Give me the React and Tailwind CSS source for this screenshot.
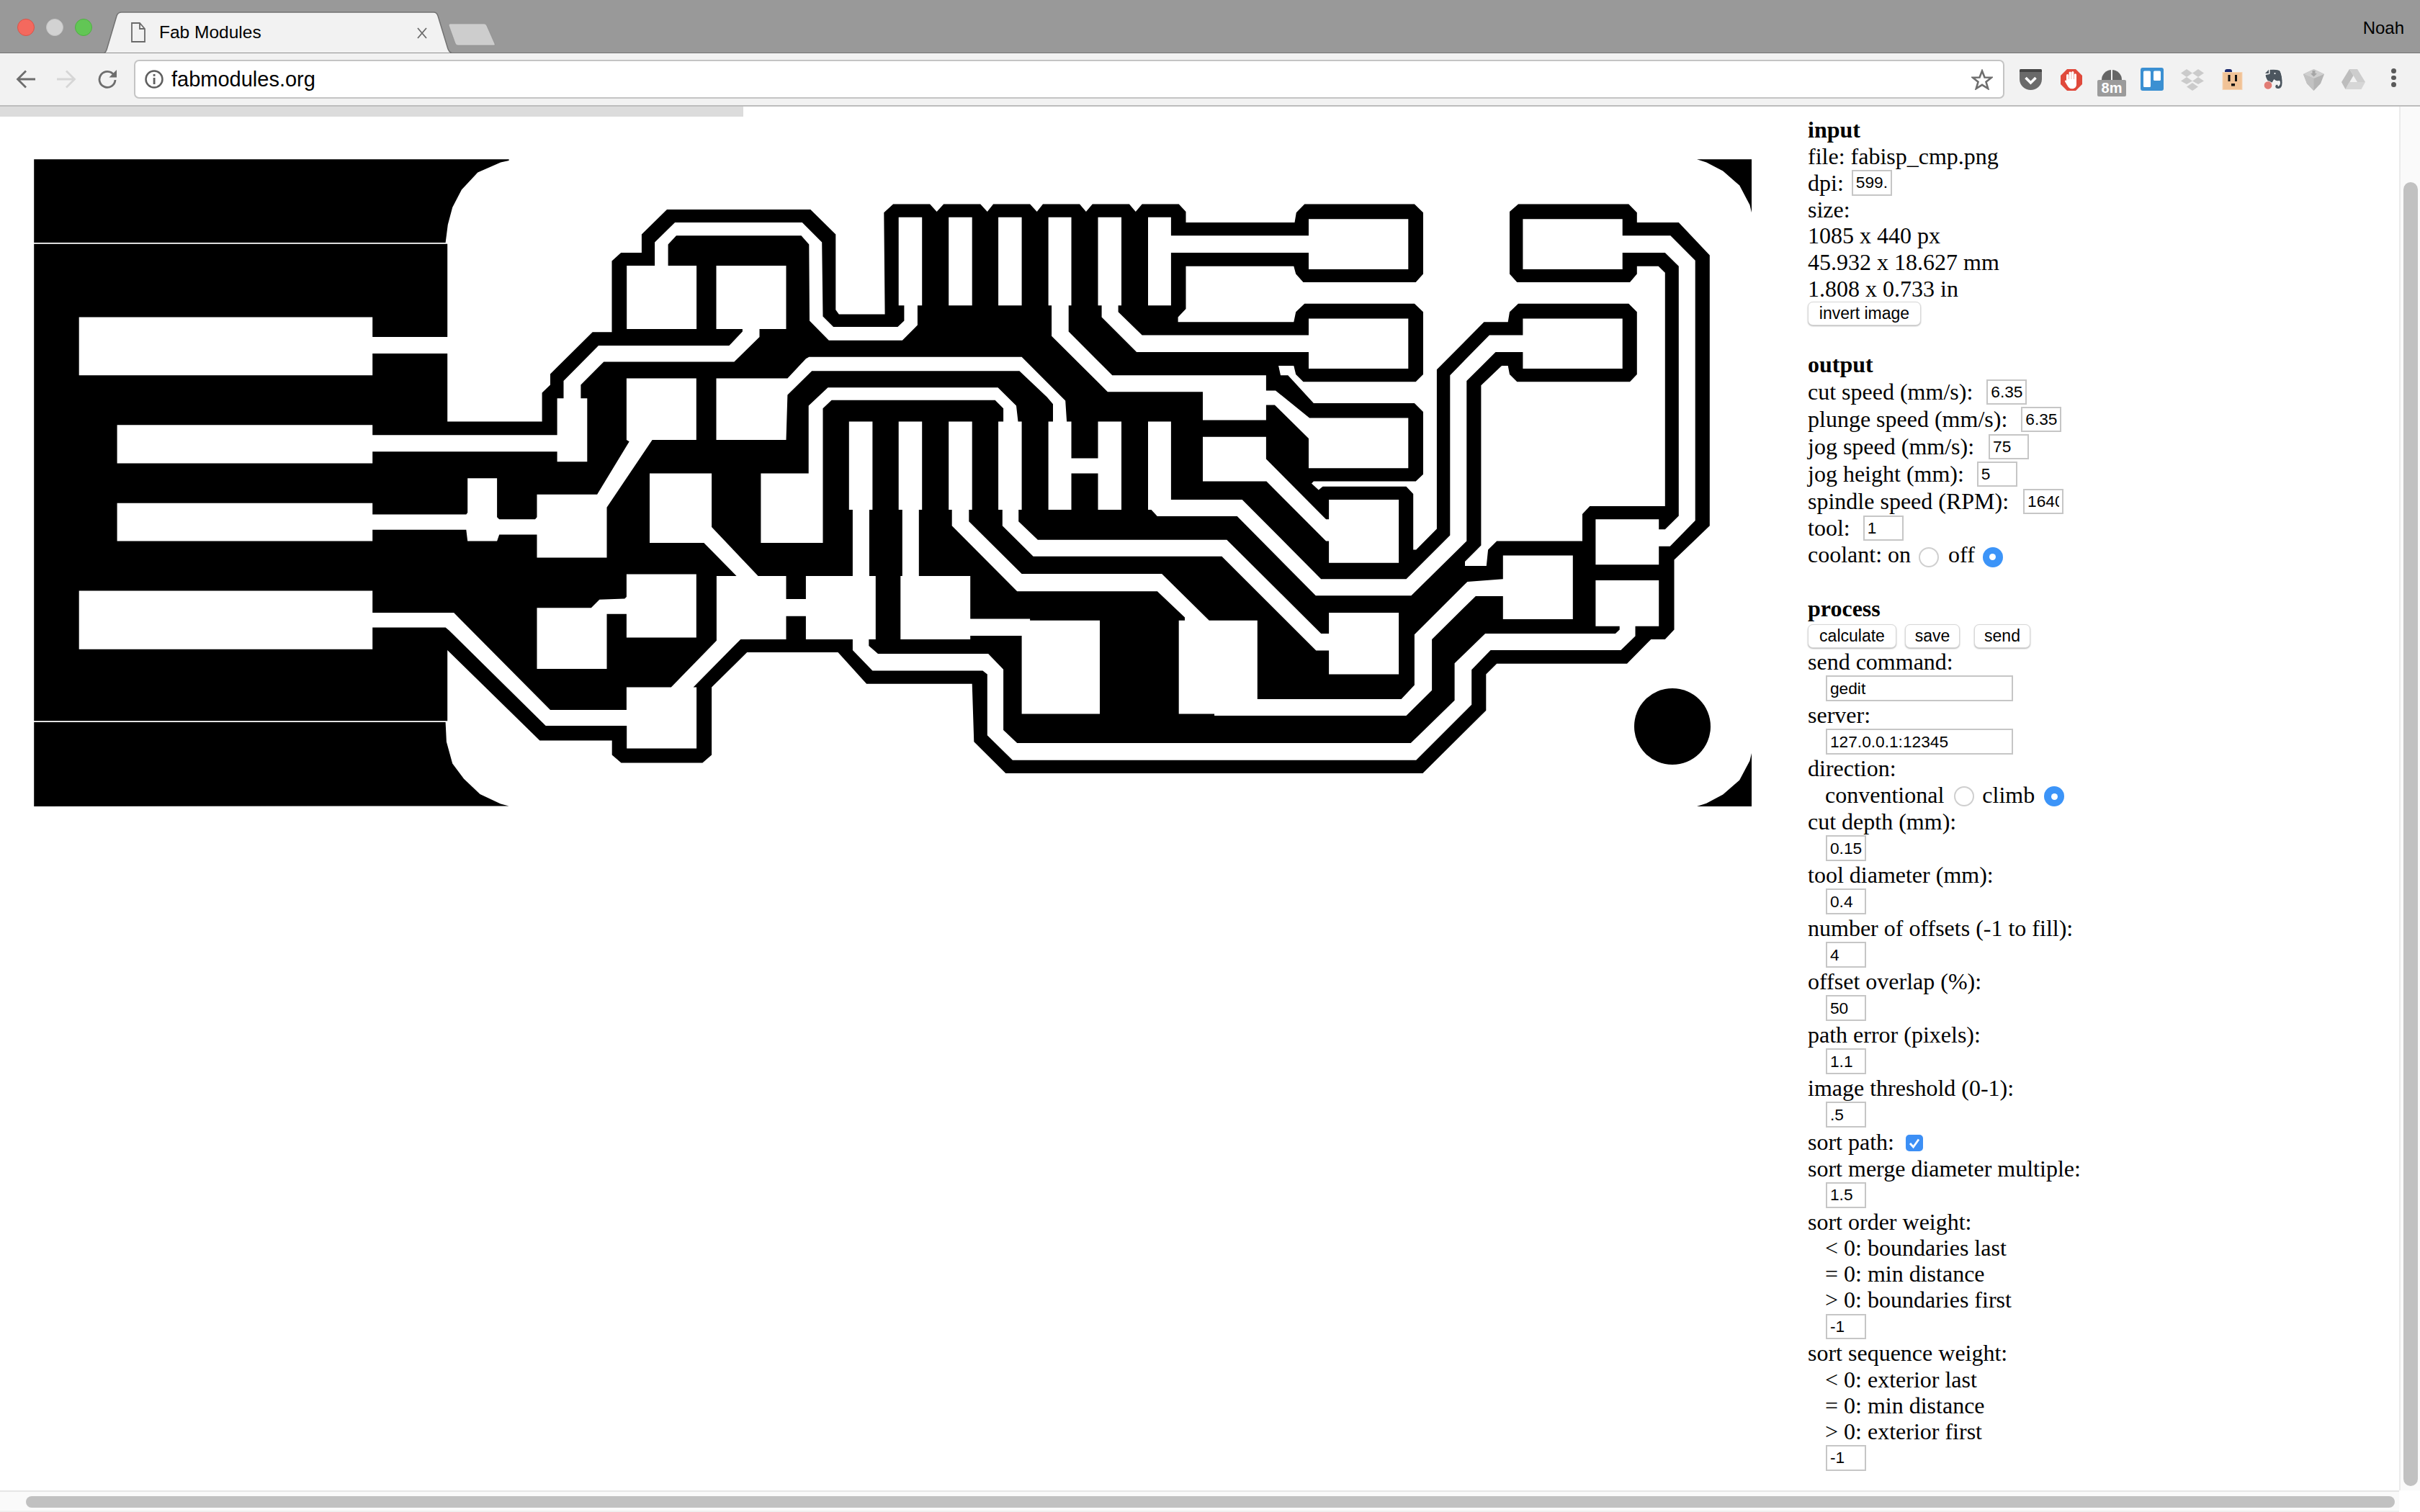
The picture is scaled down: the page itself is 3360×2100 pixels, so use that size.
import React from 'react';

// board outlines, written as "a|b|c x,y ..." - each letter is a differently scaled source space
const SX = { a: (x) => x / 1.568, b: (x) => 800 + x / 1.568, c: (x) => 1600 + x / 1.742 };
const pts = (str) => {
    let sp = 'a';
    return str.trim().split(/\s+/).map((t) => {
        if (SX[t]) { sp = t; return null; }
        const [x, y] = t.split(',').map(Number);
        return `${SX[sp](x).toFixed(1)},${(200 + y / 1.65).toFixed(1)}`;
    }).filter(Boolean).join(' ');
};

const BLACK = [
    'a 74,35 1108,35 1108,38 1090,42 1040,65 1005,105 985,145 975,185 970,226 74,226',
    'a 74,1325 970,1325 972,1370 985,1420 1010,1455 1045,1490 1090,1512 1108,1517 74,1518',
    'c 1317,35 1450,35 1450,160 1445,140 1420,95 1380,62 1340,42',
    'c 1317,1518 1450,1518 1450,1393 1445,1413 1420,1458 1380,1491 1340,1511',
    `a 74,229 974,229 974,636 1180,636 1180,570 1198,552 1198,527 1290,431 1332,431 1332,268 1352,249 1397,249 1397,207 1452,150
     b 510,150 565,207 565,380 572,390 672,390 670,157 690,138 770,138 785,155 800,138 880,138 895,155 908,138 988,138 1003,155 1016,138 1096,138 1110,155 1124,138 1204,138 1218,155 1232,138
     c 64,138 81,155 81,180 344,180 348,157 368,138 634,138 655,157 655,298 637,317 365,317 347,298 342,280 81,280 81,378 62,397 62,408 342,408 347,385 368,366 634,366 655,385 655,528 637,545 365,545 347,528 342,508 305,508 310,530 328,530 390,594 634,594 655,614 655,757 637,773 390,773 385,778 402,793 412,785 614,785 631,802 631,930 638,930 688,882 688,517 802,408 860,408 864,385 885,366 1152,366 1172,385 1172,528 1155,545 882,545 864,528 860,508 845,508 795,553 795,920 756,957 756,967 808,967 812,930 833,910 1040,910 1040,848 1058,830 1240,830 1240,295 1224,280 1172,280 1172,298 1155,317 882,317 864,298 864,155 885,138 1152,138 1172,157 1172,180 1273,180 1348,255 1348,875 1262,953 1262,1113 1240,1135 1206,1135 1148,1191 833,1191 807,1215 807,1298 654,1442
     b 935,1442 866,1370 862,1237 632,1237 570,1165 372,1165 295,1245 295,1400 275,1418 98,1418 78,1400 78,1367
     a 1175,1367 974,1160 974,1322 74,1322`,
];

const WHITE = [
    'a 172,397 811,397 811,442 980,442 980,480 811,480 811,530 172,530',
    `a 255,644 811,644 811,667 1213,667 1213,583 1227,583 1227,543 1303,462
     b 333,462 362,430 362,424 305,424 305,279 457,279 457,424 399,424 399,442 344,499 60,499 10,552 10,583 24,583 24,728
     a 1213,728 1213,705 811,705 811,732 255,732`,
    'a 255,823 811,823 811,849 1015,849 1018,845 1018,766 1082,766 1082,855 1087,860 1165,860 1169,855 1169,803 1300,803 1370,682 1364,678 1364,537 1516,537 1516,678 1420,678 1321,833 1321,948 1169,948 1169,895 1087,895 1082,910 1018,910 1015,884 811,884 811,910 255,910',
    'a 1364,986 1516,986 1516,1131 1364,1131 1364,1077 1321,1077 1321,1203 1169,1203 1169,1063 1287,1063 1305,1044 1360,1042 1364,1038',
    'b 110,279 171,279 171,225 215,180 492,180 535,225 537,395 560,419 700,419 714,405 714,370 702,370 702,168 753,168 753,370 743,370 743,415 710,450 550,450 508,405 507,230 490,210 218,210 200,230 200,279 262,279 262,424 110,424',
    `a 172,1024 811,1024 811,1074 988,1074 998,1085 1198,1297 1364,1297 1364,1245 1461,1245 1560,1138 1560,990
     b 349,990 278,914 160,914 160,755 295,755 295,878 396,990 457,990 457,1043 500,1043 500,990 602,990 602,838 594,838 594,636 645,636 645,838 638,838 638,990 652,990 652,1135 637,1135 637,1150 657,1168 897,1168 930,1204 930,1343 960,1373
     c 625,1373 731,1275 731,1190 805,1122 1120,1122 1130,1113 1130,1105 1072,1105 1072,1000 1225,1000 1225,1105 1168,1105 1168,1128 1133,1160 818,1160 772,1205 772,1285 638,1412
     b 950,1412 895,1355 895,1215 885,1207 645,1207 602,1160 602,1135 500,1135 500,1082 457,1082 457,1135 358,1135 255,1245 262,1245 262,1385 110,1385 110,1333
     a 1188,1333 978,1115 970,1108 811,1108 811,1158 172,1158`,
    `b 402,755 506,755 506,600 548,558 918,558 958,600 962,636 970,636 970,838 963,838 963,865 1005,907 1416,907
     c 180,907 408,1122 427,1122 427,1074 596,1074 596,1215 427,1215 427,1161 396,1161 168,945
     b 995,945 928,875 928,838 919,838 919,636 930,636 930,606 912,587 556,587 537,606 537,914 402,914`,
    'b 305,537 460,537 500,492 507,488 970,488 1065,588 1068,636 1078,636 1078,720 1136,720 1136,636 1187,636 1187,838 1136,838 1136,755 1078,755 1078,838 1028,838 1028,636 1038,636 1038,596 1025,580 965,520 513,520 460,575 457,678 305,678',
    'b 811,168 862,168 862,370 811,370',
    'b 919,168 970,168 970,370 919,370',
    `b 1028,168 1078,168 1078,370 1072,370 1072,430 1167,530 1502,530
     c 275,565 298,565 380,628 619,628 619,743 378,743 378,675 296,598 275,598 275,633 122,633 122,568
     b 1157,568 1035,440 1035,370 1028,370`,
    `b 1136,168 1187,168 1187,370 1180,370 1180,385 1232,438
     c 378,438 378,400 619,400 619,515 378,515 378,477
     b 1220,477 1144,397 1144,370 1136,370`,
    `b 1245,168 1295,168 1295,210
     c 378,210 378,172 619,172 619,287 378,287 378,249
     b 1295,249 1295,370 1245,370`,
    `b 1245,636 1295,636 1295,815 1450,815
     c 408,997 614,997 720,897 720,530 815,438 896,438 896,400 1137,400 1137,515 896,515 896,477 830,477 760,543 760,910 626,1035 395,1035 205,853
     b 1265,853 1252,838 1245,838`,
    `b 811,636 862,636 862,838 855,838 855,865 970,985 1275,985 1378,1092 1483,1092
     c 254,1272 602,1272 634,1240 634,1124 762,1003 848,997 848,943 1017,943 1017,1089 848,1089 848,1036 782,1036 676,1135 676,1252 614,1310 150,1310 150,1306
     b 1312,1306 1312,1092 1325,1092 1325,1085 1265,1025 960,1025 818,875 818,838 811,838`,
    'b 702,636 753,636 753,838 746,838 746,990 858,990 858,1088 988,1088 988,1092 1140,1092 1140,1306 970,1306 970,1127 858,1127 858,1135 706,1135 706,990 710,990 710,838 702,838',
    'c 122,671 275,671 275,722 420,860 427,860 427,815 596,815 596,960 427,960 427,910 420,910 276,773 122,773',
    'c 1072,860 1225,860 1225,883 1240,883 1273,852 1273,280 1240,249 1137,249 1137,287 896,287 896,172 1137,172 1137,210 1253,210 1313,267 1313,863 1252,922 1225,922 1225,964 1072,964',
];

function Board() {
    return (
        <svg viewBox="47 221 2385 899" className="w-[2385px] h-[899px] mt-[59px] ml-[47px] shrink-0">
            {BLACK.map((d, i) => <polygon key={i} points={pts(d)} fill="#000" />)}
            {WHITE.map((d, i) => <polygon key={i} points={pts(d)} fill="#fff" />)}
            <circle cx="2322" cy="1009" r="53" fill="#000" />
        </svg>
    );
}

function Field({ value, wide, className = '' }) {
    return (
        <input
            readOnly
            value={value}
            className={`${wide ? 'w-[260px]' : 'w-[56px]'} h-[35.5px] shrink-0 border-2 border-[#c6c6c6] bg-white px-[4px] text-[22.7px] text-black [font-family:'Liberation_Sans',sans-serif] outline-none ${className}`}
        />
    );
}

function Radio({ on, className = '' }) {
    if (on) {
        return (
            <span className={`w-[28px] h-[28px] rounded-full bg-[#3c94f8] flex items-center justify-center shrink-0 ${className}`}>
                <span className="w-[9px] h-[9px] rounded-full bg-white" />
            </span>
        );
    }
    return <span className={`w-[28px] h-[28px] rounded-full border-2 border-[#cfcfcf] bg-white shrink-0 ${className}`} />;
}

function Btn({ children, className = '' }) {
    return (
        <button className={`h-[33px] rounded-[7px] border border-[#d8d8d8] bg-white shadow-[0_1px_2px_rgba(0,0,0,0.3)] text-[23px] leading-none text-black [font-family:'Liberation_Sans',sans-serif] ${className}`}>
            {children}
        </button>
    );
}

const Line = ({ children, className = 'h-[36.2px]' }) => (
    <div className={`flex items-center whitespace-pre ${className}`}>{children}</div>
);
const Indent = ({ children }) => <Line><span className="ml-[24px]">{children}</span></Line>;
const InputLine = ({ value, wide }) => <Line className="h-[37.8px]"><Field value={value} wide={wide} className="ml-[25px]" /></Line>;

function Panel() {
    return (
        <div className="ml-[78px] text-[32px] text-black [font-family:'Liberation_Serif',serif]">
            <Line className="h-[36.75px] font-bold">input</Line>
            <Line className="h-[36.75px]">file: fabisp_cmp.png</Line>
            <Line className="h-[36.75px]">dpi:<Field value="599." className="ml-[11px]" /></Line>
            <Line className="h-[36.75px]">size:</Line>
            <Line className="h-[36.75px]">1085 x 440 px</Line>
            <Line className="h-[36.75px]">45.932 x 18.627 mm</Line>
            <Line className="h-[36.75px]">1.808 x 0.733 in</Line>
            <Btn className="w-[157px] block">invert image</Btn>

            <Line className="h-[38px] font-bold mt-[35px]">output</Line>
            <Line className="h-[38px]">cut speed (mm/s):<Field value="6.35" className="ml-[19px]" /></Line>
            <Line className="h-[38px]">plunge speed (mm/s):<Field value="6.35" className="ml-[19px]" /></Line>
            <Line className="h-[38px]">jog speed (mm/s):<Field value="75" className="ml-[20px]" /></Line>
            <Line className="h-[38px]">jog height (mm):<Field value="5" className="ml-[18px]" /></Line>
            <Line className="h-[38px]">spindle speed (RPM):<Field value="16400" className="ml-[20px]" /></Line>
            <Line className="h-[36px]">tool:<Field value="1" className="ml-[18px]" /></Line>
            <Line className="h-[36.8px]">coolant: on<Radio className="ml-[11px] mt-[8px]" /><span className="ml-[13px]">off</span><Radio on className="ml-[11px] mt-[8px]" /></Line>

            <Line className="h-[37px] font-bold mt-[38px]">process</Line>
            <div className="h-[38px] flex pt-[4px]">
                <Btn className="w-[123px]">calculate</Btn>
                <Btn className="w-[76px] ml-[12px]">save</Btn>
                <Btn className="w-[78px] ml-[20px]">send</Btn>
            </div>

            <Line>send command:</Line>
            <InputLine value="gedit" wide />
            <Line>server:</Line>
            <InputLine value="127.0.0.1:12345" wide />
            <Line>direction:</Line>
            <Line className="h-[37.8px]"><span className="ml-[24px]">conventional</span><Radio className="ml-[14px] mt-[4px]" /><span className="ml-[11px]">climb</span><Radio on className="ml-[13px] mt-[4px]" /></Line>
            <Line>cut depth (mm):</Line>
            <InputLine value="0.15" />
            <Line>tool diameter (mm):</Line>
            <InputLine value="0.4" />
            <Line>number of offsets (-1 to fill):</Line>
            <InputLine value="4" />
            <Line>offset overlap (%):</Line>
            <InputLine value="50" />
            <Line>path error (pixels):</Line>
            <InputLine value="1.1" />
            <Line>image threshold (0-1):</Line>
            <InputLine value=".5" />
            <Line className="h-[37.8px]">
                sort path:
                <span className="ml-[16px] mt-[3px] w-[24px] h-[23px] rounded-[5px] bg-[#3c8ff5] flex items-center justify-center">
                    <svg viewBox="0 0 24 23" className="w-[24px] h-[23px]">
                        <polyline points="6,12 10.5,17 18,6.5" fill="none" stroke="#fff" strokeWidth="2.8" />
                    </svg>
                </span>
            </Line>
            <Line>sort merge diameter multiple:</Line>
            <InputLine value="1.5" />
            <Line>sort order weight:</Line>
            <Indent>{'< 0: boundaries last'}</Indent>
            <Indent>= 0: min distance</Indent>
            <Indent>{'> 0: boundaries first'}</Indent>
            <InputLine value="-1" />
            <Line>sort sequence weight:</Line>
            <Indent>{'< 0: exterior last'}</Indent>
            <Indent>= 0: min distance</Indent>
            <Indent>{'> 0: exterior first'}</Indent>
            <InputLine value="-1" />
        </div>
    );
}

function Tab() {
    return (
        <div className="relative w-[486px] h-[58px] mt-[16px] ml-[14px] shrink-0">
            <svg viewBox="0 0 486 58" className="absolute inset-0 w-[486px] h-[58px]">
                <path d="M2 58 C5 57 6 54 7 50 L20 6 C21 3 23 1 27 1 H460 C463 1 465 3 466 6 L480 52 C481 55 483 57 486 58 Z" fill="#f2f2f2" stroke="#727272" strokeWidth="1.5" />
            </svg>
            <svg viewBox="0 0 20 28" className="absolute left-[40px] top-[15px] w-[20px] h-[28px]">
                <path d="M1 1 H12 L19 9 V27 H1 Z M12 1 V9 H19" fill="none" stroke="#6a6a6a" strokeWidth="1.8" />
            </svg>
            <span className="absolute left-[79px] top-[15px] text-[24.5px] leading-[28px] text-black">Fab Modules</span>
            <svg viewBox="0 0 14 16" className="absolute left-[437px] top-[22px] w-[14px] h-[16px]">
                <path d="M1 1 L13 15 M13 1 L1 15" stroke="#6a6a6a" strokeWidth="1.8" />
            </svg>
        </div>
    );
}

function Extensions() {
    return (
        <div className="flex items-start ml-[21px] mt-[20px]">
            {/* pocket */}
            <svg viewBox="0 0 31 29" className="w-[31px] h-[29px] mt-[2px]">
                <path d="M2 0 H29 A2 2 0 0 1 31 2 V14 C31 23 23 29 15.5 29 C8 29 0 23 0 14 V2 A2 2 0 0 1 2 0 Z" fill="#6a6a6a" />
                <path d="M2 0 H29 A2 2 0 0 1 31 2 V4 H0 V2 A2 2 0 0 1 2 0 Z" fill="#454545" />
                <polyline points="8.5,12 15.5,19 22.5,12" fill="none" stroke="#fff" strokeWidth="3.6" />
            </svg>
            {/* adblock */}
            <svg viewBox="0 0 30 30" className="w-[30px] h-[30px] ml-[26px] mt-[2px]">
                <polygon points="9,0 21,0 30,9 30,21 21,30 9,30 0,21 0,9" fill="#e0493b" />
                <g fill="#fff">
                    <rect x="8" y="7" width="3.2" height="13" rx="1.6" />
                    <rect x="11.6" y="3.4" width="3.2" height="14" rx="1.6" />
                    <rect x="15.2" y="3" width="3.2" height="14" rx="1.6" />
                    <rect x="18.8" y="6.2" width="3.2" height="12" rx="1.6" />
                    <path d="M8 14 H22 V21 C22 25 19.5 27.3 15.5 27.3 C12.5 27.3 11 25.5 9.5 23 L6.2 17.5 C5.4 15.8 7 14.6 8 16 Z" />
                </g>
            </svg>
            {/* timer with 8m badge */}
            <div className="relative w-[40px] h-[38px] ml-[21px] mt-[2px]">
                <svg viewBox="0 0 28 15" className="absolute left-[6px] top-0 w-[28px] h-[15px]">
                    <path d="M0 15 A14 14 0 0 1 28 15 Z" fill="#666" />
                    <rect x="13" y="1" width="2" height="14" fill="#f2f2f2" />
                </svg>
                <span className="absolute left-0 top-[15px] w-[40px] h-[23px] rounded-[2px] bg-[#9b9b9b] text-white text-[20px] leading-[23px] text-center font-bold">8m</span>
            </div>
            {/* trello */}
            <svg viewBox="0 0 32 32" className="w-[32px] h-[32px] ml-[20px]">
                <rect width="32" height="32" rx="3" fill="#3b90d2" />
                <rect x="4" y="4.5" width="10" height="22.5" rx="1.5" fill="#fff" />
                <rect x="18" y="4.5" width="10" height="13.5" rx="1.5" fill="#fff" />
            </svg>
            {/* dropbox */}
            <svg viewBox="0 0 32 30" className="w-[32px] h-[30px] ml-[24px] mt-[2px]">
                <g fill="#cbcbcb">
                    <polygon points="8,0 16,5.5 8,11 0,5.5" />
                    <polygon points="24,0 32,5.5 24,11 16,5.5" />
                    <polygon points="8,11 16,16.5 8,21 0,16.5" />
                    <polygon points="24,11 32,16.5 24,21 16,16.5" />
                    <polygon points="16,19 24,24.5 16,30 8,24.5" />
                </g>
            </svg>
            {/* outlet */}
            <div className="relative w-[29px] h-[29px] ml-[25px] mt-[2px]">
                <span className="absolute left-[4px] top-0 w-[10px] h-[4px] rounded-t-[3px] bg-[#1c2a6e]" />
                <svg viewBox="0 0 28 25" className="absolute left-0 top-[4px] w-[29px] h-[25px]">
                    <rect x="0.5" y="0.5" width="27" height="24" fill="#f1c296" stroke="#f6d5b5" />
                    <rect x="8" y="4" width="3" height="9" fill="#111" />
                    <rect x="17.5" y="4" width="3" height="9" fill="#111" />
                    <rect x="12.5" y="16" width="5" height="3.5" fill="#111" />
                </svg>
            </div>
            {/* evernote */}
            <svg viewBox="0 0 27 29" className="w-[27px] h-[29px] ml-[29px] mt-[1.5px] overflow-visible">
                <path d="M8 0.5 C12 0 20 0 22.5 2 C25 6 26.5 14 26 21 C25.5 26 22 28 19 27.5 C16 27 15 24 16.5 22 C18 20.5 20.5 21.5 20 23.5 C22 23 23 20 22 16.5 C19 17.5 16 16.5 14.5 14.5 L12 19 H7 C4 15 2 11 2 7.5 L8 6.5 Z" fill="#4c565f" stroke="#fff" strokeWidth="1" />
                <polygon points="2,6 7,0.8 7,6" fill="#4c565f" />
                <circle cx="15.5" cy="6" r="1" fill="#fff" />
                <circle cx="6" cy="22.5" r="5.8" fill="#e17c74" stroke="#fff" strokeWidth="0.8" />
            </svg>
            {/* shield */}
            <svg viewBox="0 0 29 30" className="w-[29px] h-[30px] ml-[28px] mt-[2px]">
                <polygon points="14.5,0 29,7 24,20 14.5,30 5,20 0,7" fill="#b4b4b4" />
                <polygon points="14.5,0 29,7 14.5,13 0,7" fill="#cfcfcf" />
                <polygon points="14.5,13 14.5,30 5,20 0,7" fill="#c2c2c2" />
                <path d="M12.5 2 H16.5 V6 H19 L14.5 10.5 L10 6 H12.5 Z" fill="#a6a6a6" />
            </svg>
            {/* drive */}
            <svg viewBox="0 0 33 28" className="w-[33px] h-[28px] ml-[24px] mt-[2px]">
                <polygon points="11,0 22,0 33,18 22,18" fill="#cdcdcd" />
                <polygon points="11,0 16.5,9 5.5,28 0,18" fill="#bdbdbd" />
                <polygon points="5.5,28 11,18 33,18 27.5,28" fill="#d6d6d6" />
            </svg>
            {/* menu */}
            <div className="flex flex-col gap-[3px] ml-[36px] mt-[1px]">
                <span className="w-[6.5px] h-[6.5px] rounded-full bg-[#5a5a5a]" />
                <span className="w-[6.5px] h-[6.5px] rounded-full bg-[#5a5a5a]" />
                <span className="w-[6.5px] h-[6.5px] rounded-full bg-[#5a5a5a]" />
            </div>
        </div>
    );
}

export default function App() {
    return (
        <div className="w-[3360px] h-[2100px] flex flex-col overflow-hidden bg-white [font-family:'Liberation_Sans',sans-serif]">
            {/* title bar */}
            <div className="h-[74px] shrink-0 flex items-start bg-[#999999] border-b border-[#747474]">
                <div className="flex gap-[16px] ml-[24px] mt-[26px]">
                    <span className="w-[24px] h-[24px] rounded-full bg-[#f4695e] border border-[#d8544a]" />
                    <span className="w-[24px] h-[24px] rounded-full bg-[#d2d2d2] border border-[#c4c4c4]" />
                    <span className="w-[24px] h-[24px] rounded-full bg-[#62c655] border border-[#4faf43]" />
                </div>
                <Tab />
                <svg viewBox="0 0 66 31" className="w-[66px] h-[31px] mt-[33px] -ml-[6px] shrink-0">
                    <path d="M3 0 H50 C52 0 53 1 54 3 L65 28 V30 H14 C12 30 11 29 10 27 L1 2 C1 1 2 0 3 0 Z" fill="#cdcdcd" stroke="#8a8a8a" strokeWidth="0.6" />
                </svg>
                <span className="ml-auto mr-[22px] mt-[25px] text-[24px] leading-[28px] text-black">Noah</span>
            </div>

            {/* toolbar */}
            <div className="h-[74px] shrink-0 flex items-start bg-[#f2f2f2] border-b-2 border-[#bdbdbd]">
                <svg viewBox="0 0 28 26" className="w-[28px] h-[26px] ml-[22px] mt-[23px] shrink-0">
                    <path d="M27 13 H3 M14 1.5 L2.5 13 L14 24.5" fill="none" stroke="#6d6d6d" strokeWidth="2.8" />
                </svg>
                <svg viewBox="0 0 28 26" className="w-[28px] h-[26px] ml-[28px] mt-[23px] shrink-0">
                    <path d="M1 13 H25 M14 1.5 L25.5 13 L14 24.5" fill="none" stroke="#d6d6d6" strokeWidth="2.8" />
                </svg>
                <svg viewBox="0 0 28 26" className="w-[28px] h-[26px] ml-[29px] mt-[23px] shrink-0">
                    <path d="M23 7 A11 11 0 1 0 25 14" fill="none" stroke="#6d6d6d" strokeWidth="2.8" />
                    <polygon points="27,0 27,10.5 16.5,10.5" fill="#6d6d6d" />
                </svg>
                <div className="w-[2597px] h-[54px] ml-[23px] mt-[9px] shrink-0 flex items-center bg-white border-2 border-[#c4c4c4] rounded-[7px]">
                    <svg viewBox="0 0 28 28" className="w-[28px] h-[28px] ml-[12px]">
                        <circle cx="14" cy="14" r="11.5" fill="none" stroke="#5f5f5f" strokeWidth="2.5" />
                        <rect x="12.7" y="12" width="2.8" height="9" fill="#5f5f5f" />
                        <rect x="12.7" y="7" width="2.8" height="2.8" fill="#5f5f5f" />
                    </svg>
                    <span className="ml-[10px] text-[29px] leading-[32px] text-black">fabmodules.org</span>
                    <svg viewBox="0 0 30 29" className="w-[30px] h-[29px] ml-auto mr-[14px]">
                        <polygon points="15,2.5 18.5,11.5 28,11.8 20.5,17.8 23.2,27 15,21.8 6.8,27 9.5,17.8 2,11.8 11.5,11.5" fill="none" stroke="#6e6e6e" strokeWidth="2.6" />
                    </svg>
                </div>
                <Extensions />
            </div>

            {/* page */}
            <div className="flex-1 min-h-0 flex">
                <div className="flex-1 min-w-0 flex flex-col">
                    <div className="w-[1032px] h-[14px] bg-[#dcdcdc] shrink-0" />
                    <div className="flex items-start flex-1 min-h-0">
                        <Board />
                        <Panel />
                    </div>
                </div>
                <div className="w-[29px] shrink-0 bg-[#fafafa] border-l-2 border-[#ebebeb] flex justify-center">
                    <div className="w-[20px] h-[1811px] mt-[105px] rounded-full bg-[#c1c1c1]" />
                </div>
            </div>

            {/* bottom scrollbar */}
            <div className="h-[30px] shrink-0 flex">
                <div className="w-[3331px] bg-[#fafafa] border-t-2 border-b-2 border-t-[#e6e6e6] border-b-[#f0f0f0] pl-[36px] pt-[6px]">
                    <div className="w-[3289px] h-[16px] rounded-full bg-[#c1c1c1]" />
                </div>
                <div className="flex-1 bg-white" />
            </div>
        </div>
    );
}
